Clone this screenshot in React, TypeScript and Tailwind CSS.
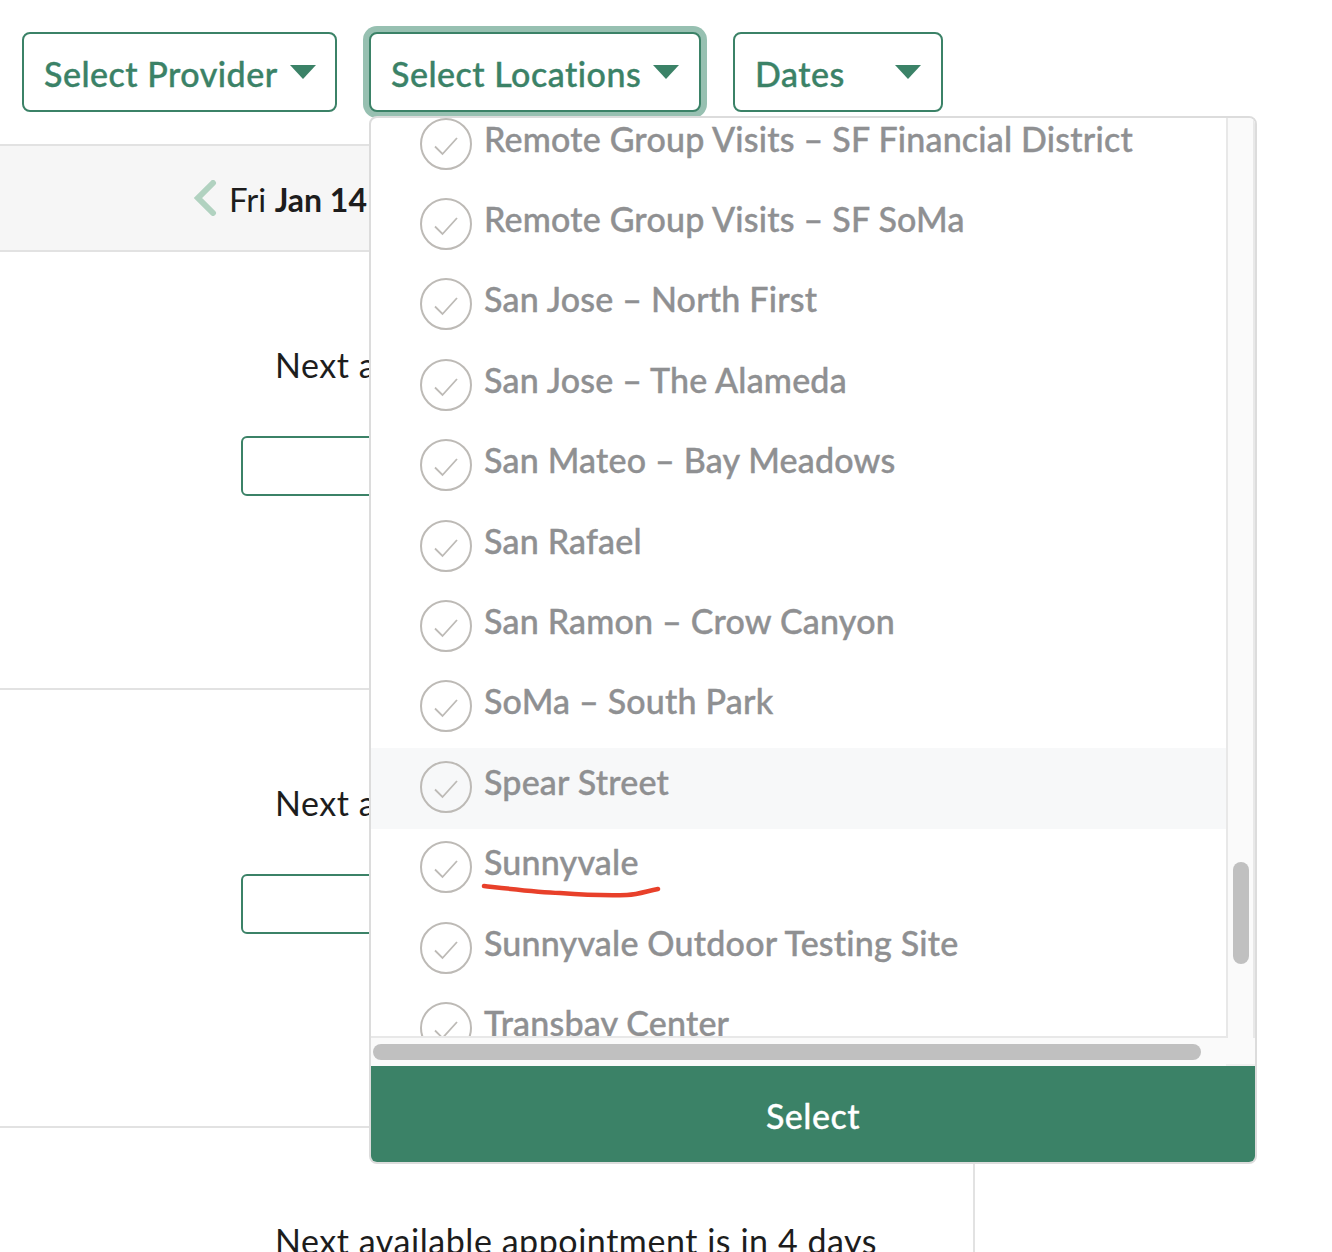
const GREEN = "#3b8267";

const locations = [
  "Remote Group Visits – SF Financial District",
  "Remote Group Visits – SF SoMa",
  "San Jose – North First",
  "San Jose – The Alameda",
  "San Mateo – Bay Meadows",
  "San Rafael",
  "San Ramon – Crow Canyon",
  "SoMa – South Park",
  "Spear Street",
  "Sunnyvale",
  "Sunnyvale Outdoor Testing Site",
  "Transbay Center",
];

function Caret() {
  return (
    <svg width="26" height="14" viewBox="0 0 26 14" className="block shrink-0">
      <path d="M0 0H26L13 14Z" fill={GREEN} />
    </svg>
  );
}

function FilterButton({ label, width, focused, gap }: { label: string; width: string; focused?: boolean; gap: string }) {
  return (
    <button
      className={`${width} ${gap} h-20 shrink-0 rounded-lg border-2 border-[#3b8267] bg-white pl-5 flex items-center text-[34px] font-medium tracking-[0.5px] text-[#3b8267] [-webkit-text-stroke:0.4px_#3b8267] ${focused ? "ring-[6px] ring-[#97c0b1]" : ""}`}
    >
      <span className="leading-none pt-1">{label}</span>
      <span className="block">
        <Caret />
      </span>
    </button>
  );
}

function CheckCircle() {
  return (
    <svg width="52" height="52" viewBox="0 0 52 52" className="-mt-[3px] shrink-0">
      <circle cx="26" cy="26" r="25" fill="none" stroke="#bdbab6" strokeWidth="2" />
      <path d="M15 28.5L22.5 36L37 20" fill="none" stroke="#bdbab6" strokeWidth="1.8" />
    </svg>
  );
}

function AppointmentRow({ height }: { height: string }) {
  return (
    <div className={`${height} border-b-2 border-[#e2e2e2] pl-[241px] pt-[93px]`}>
      <p className="pl-[34px] text-[34px] leading-10 tracking-[0.55px] text-[#1d1d1d]">
        Next available appointment is in 4 days
      </p>
      <div className="mt-[51px] h-[60px] w-[668px] rounded-md border-2 border-[#3b8267] bg-white" />
    </div>
  );
}

export default function App() {
  return (
    <div className="relative h-[1252px] overflow-hidden bg-white font-['Lato',sans-serif]">
      <div className="flex gap-8 pl-[22px] pt-8">
        <FilterButton label="Select Provider" width="w-[315px]" gap="gap-3" />
        <FilterButton label="Select Locations" width="w-[332px]" gap="gap-3" focused />
        <FilterButton label="Dates" width="w-[210px]" gap="gap-[50px]" />
      </div>

      <div className="mt-8 w-[975px] border-r-2 border-[#e2e2e2]">
        <div className="flex h-[108px] items-center gap-3 border-y-2 border-[#e2e2e2] bg-[#f6f6f6] pl-[193px]">
          <svg width="24" height="36" viewBox="0 0 24 36">
            <path d="M20 3L5 18L20 33" fill="none" stroke="#b1d2c0" strokeWidth="6" strokeLinecap="round" />
          </svg>
          <p className="pt-[4px] text-[33px] text-[#1d1d1d]">
            Fri <span className="text-[32px] font-bold">Jan 14</span>
          </p>
        </div>
        <AppointmentRow height="h-[438px]" />
        <AppointmentRow height="h-[438px]" />
        <AppointmentRow height="h-[300px]" />
      </div>

      <div className="absolute left-[369px] top-[116px] flex h-[1048px] w-[888px] flex-col overflow-hidden rounded-lg border-2 border-[#dcdcdc] bg-white">
        <div className="flex h-[948px] shrink-0">
          <div className="flex w-[855px] flex-col">
            <div className="relative h-[920px] overflow-hidden border-b-2 border-[#e8e8e8]">
              <div className="-mt-[13px]">
                {locations.map((name) => (
                  <div
                    key={name}
                    className={`flex h-[80.4px] items-center pl-[49px] ${name === "Spear Street" ? "bg-[#f7f8f9]" : ""}`}
                  >
                    <CheckCircle />
                    <span className="-mt-[14px] ml-3 text-[34px] font-medium tracking-[0.2px] whitespace-nowrap text-[#8f9092] [-webkit-text-stroke:0.4px_#8f9092]">
                      {name}
                    </span>
                  </div>
                ))}
              </div>
              <svg width="190" height="20" viewBox="0 0 190 20" className="absolute left-[110px] top-[762px]">
                <path d="M3 6C30 9 55 12 79 13C105 15 130 15.5 146 15C158 14.5 166 11 177 9" fill="none" stroke="#e8402a" strokeWidth="4.5" strokeLinecap="round" />
              </svg>
            </div>
            <div className="flex h-[28px] items-center bg-[#fafafa] pl-[2px]">
              <div className="h-4 w-[828px] rounded-lg bg-[#c0c0c0]" />
            </div>
          </div>
          <div className="flex w-[29px] flex-col">
            <div className="h-[920px] border-x-2 border-[#e8e8e8] bg-[#fafafa] pl-[5px] pt-[744px]">
              <div className="h-[102px] w-4 rounded-lg bg-[#c0c0c0]" />
            </div>
            <div className="flex-1 border-b-2 border-[#f0f0f0] bg-[#fafafa]" />
          </div>
        </div>
        <button className="flex flex-1 items-center justify-center bg-[#3b8267] pt-[2px] text-[34px] font-medium tracking-[0.5px] text-white [-webkit-text-stroke:0.3px_#ffffff]">
          Select
        </button>
      </div>
    </div>
  );
}
